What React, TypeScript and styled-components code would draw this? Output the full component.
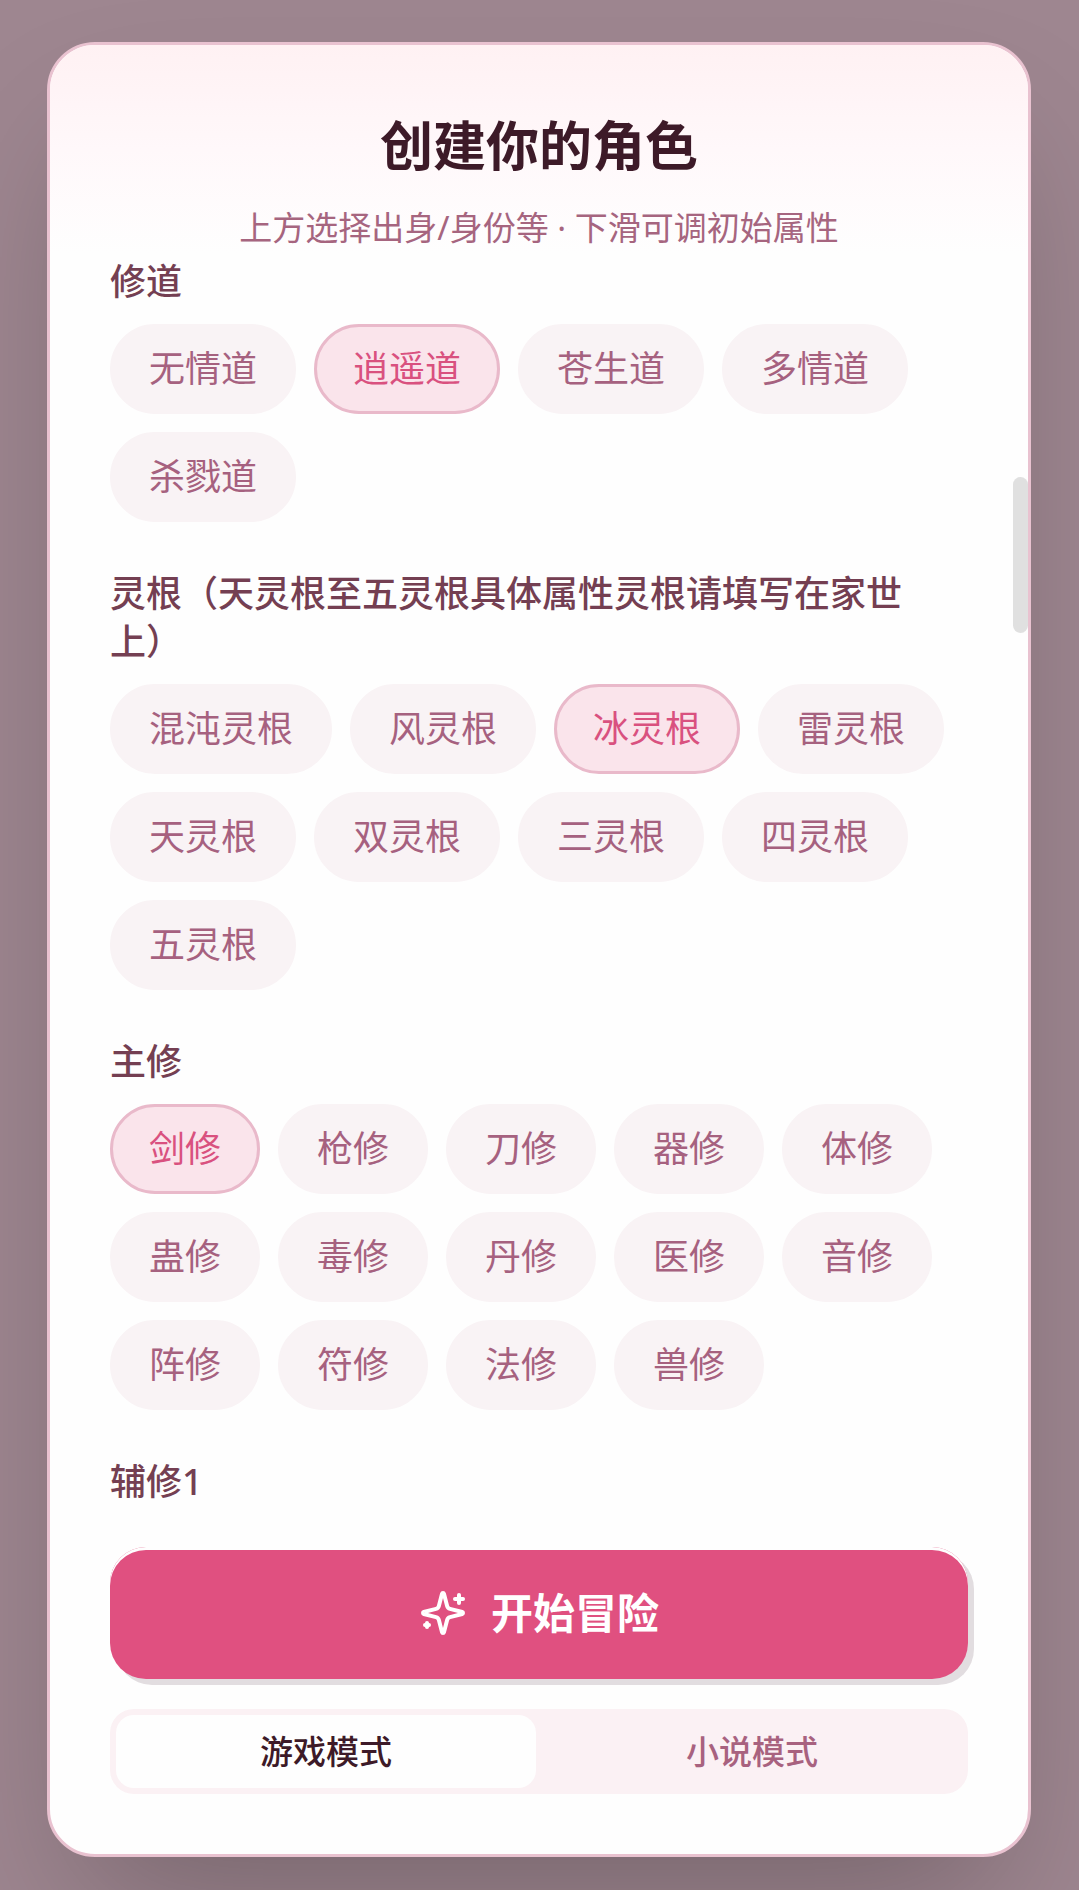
import React, { useState } from "react";
import styled, { createGlobalStyle } from "styled-components";

const GlobalStyle = createGlobalStyle`
  *, *::before, *::after { box-sizing: border-box; }
  body {
    margin: 0;
    background: #9e8690;
    font-family: "Noto Sans", "Noto Sans CJK SC", sans-serif;
    text-spacing-trim: space-all;
  }
  button { font: inherit; margin: 0; cursor: pointer; }
`;

const Backdrop = styled.div`
  display: flex;
  height: 100vh;
  padding: 42px 48px 33px 47px;
  overflow: hidden;
`;

const Dialog = styled.main`
  display: flex;
  flex: 1;
  flex-direction: column;
  min-width: 0;
  overflow: hidden;
  background: #fefefe;
  border: 3px solid #e9c2d0;
  border-radius: 48px;
  box-shadow: 0 75px 150px -36px rgba(0, 0, 0, 0.25);
`;

const Header = styled.header`
  display: flex;
  flex-direction: column;
  gap: 16px;
  padding: 60px 60px 0;
  text-align: center;
  background: linear-gradient(to bottom, #fff1f3, #fff8fa 50%, #fefefe);
`;

const Title = styled.h1`
  margin: 0;
  color: #3d1a28;
  font-size: 53px;
  font-weight: 700;
  line-height: 82px;
`;

const Subtitle = styled.p`
  margin: 0;
  color: #a6657f;
  font-size: 33px;
  line-height: 50px;
`;

const ScrollFrame = styled.div`
  position: relative;
  flex: 1;
  min-height: 0;
`;

const ScrollArea = styled.div`
  display: flex;
  flex-direction: column;
  gap: 48px;
  height: 100%;
  padding: 5px 60px;
  overflow-y: auto;
  scrollbar-width: none;
`;

const ScrollThumb = styled.div`
  position: absolute;
  top: 224px;
  right: 0;
  width: 15px;
  height: 156px;
  background: #e0e0e0;
  border-radius: 8px;
`;

const Section = styled.section`
  display: flex;
  flex-direction: column;
  gap: 18px;
`;

const SectionTitle = styled.h2`
  margin: 0;
  color: #743f52;
  font-size: 36px;
  font-weight: 500;
  line-height: 48px;
`;

const ChipList = styled.div`
  display: flex;
  flex-wrap: wrap;
  gap: 18px;
`;

const Chip = styled.button<{ $active: boolean }>`
  height: 90px;
  padding: 0 36px;
  color: ${(p) => (p.$active ? "#d9517f" : "#a6617f")};
  background: ${(p) => (p.$active ? "#fae4eb" : "#f9f3f5")};
  border: 3px solid ${(p) => (p.$active ? "#e9b9ca" : "#f9f3f5")};
  border-radius: 45px;
  && {
    font-size: 36px;
    line-height: 48px;
  }
`;

const Footer = styled.footer`
  display: flex;
  flex-direction: column;
  gap: 30px;
  padding: 18px 60px 60px;
`;

const StartButton = styled.button`
  display: flex;
  align-items: center;
  justify-content: center;
  gap: 24px;
  height: 132px;
  color: #fff;
  background: #e05080;
  border: 0;
  border-radius: 36px;
  box-shadow: 6px 6px 0 #e2dde0, inset 0 3px 0 #fefefe;
  && {
    font-size: 42px;
    font-weight: 700;
    line-height: 48px;
  }
`;

const ModeSwitch = styled.div`
  display: flex;
  gap: 6px;
  height: 85px;
  padding: 6px;
  background: #fbf1f4;
  border-radius: 24px;
`;

const ModeButton = styled.button<{ $active: boolean }>`
  flex: 1;
  padding: 0;
  color: ${(p) => (p.$active ? "#3d1a28" : "#a8627f")};
  background: ${(p) => (p.$active ? "#fefefe" : "transparent")};
  border: 0;
  border-radius: 18px;
  && {
    font-size: 33px;
    font-weight: 500;
    line-height: 48px;
  }
`;

function SparklesIcon() {
  return (
    <svg
      width="48"
      height="48"
      viewBox="0 0 24 24"
      fill="none"
      stroke="currentColor"
      strokeWidth="2"
      strokeLinecap="round"
      strokeLinejoin="round"
      aria-hidden="true"
    >
      <path d="M9.937 15.5A2 2 0 0 0 8.5 14.063l-6.135-1.582a.5.5 0 0 1 0-.962L8.5 9.936A2 2 0 0 0 9.937 8.5l1.582-6.135a.5.5 0 0 1 .963 0L14.063 8.5A2 2 0 0 0 15.5 9.937l6.135 1.581a.5.5 0 0 1 0 .964L15.5 14.063a2 2 0 0 0-1.437 1.437l-1.582 6.135a.5.5 0 0 1-.963 0z" />
      <path d="M20 3v4" />
      <path d="M22 5h-4" />
      <path d="M4 17v2" />
      <path d="M5 18H3" />
    </svg>
  );
}

interface Group {
  title: string;
  options: string[];
  initial?: string;
}

const groups: Group[] = [
  {
    title: "修道",
    options: ["无情道", "逍遥道", "苍生道", "多情道", "杀戮道"],
    initial: "逍遥道",
  },
  {
    title: "灵根（天灵根至五灵根具体属性灵根请填写在家世上）",
    options: [
      "混沌灵根", "风灵根", "冰灵根", "雷灵根", "天灵根",
      "双灵根", "三灵根", "四灵根", "五灵根",
    ],
    initial: "冰灵根",
  },
  {
    title: "主修",
    options: [
      "剑修", "枪修", "刀修", "器修", "体修", "蛊修", "毒修",
      "丹修", "医修", "音修", "阵修", "符修", "法修", "兽修",
    ],
    initial: "剑修",
  },
  { title: "辅修1", options: [] },
];

function OptionGroup({ title, options, initial }: Group) {
  const [selected, setSelected] = useState(initial);
  return (
    <Section aria-label={title}>
      <SectionTitle>{title}</SectionTitle>
      {options.length > 0 && (
        <ChipList>
          {options.map((option) => (
            <Chip
              key={option}
              type="button"
              $active={option === selected}
              aria-pressed={option === selected}
              onClick={() => setSelected(option)}
            >
              {option}
            </Chip>
          ))}
        </ChipList>
      )}
    </Section>
  );
}

const modes = ["游戏模式", "小说模式"];

export default function App() {
  const [mode, setMode] = useState(modes[0]);
  return (
    <>
      <GlobalStyle />
      <Backdrop>
        <Dialog>
          <Header>
            <Title>创建你的角色</Title>
            <Subtitle>上方选择出身/身份等 · 下滑可调初始属性</Subtitle>
          </Header>
          <ScrollFrame>
            <ScrollArea>
              {groups.map((group) => (
                <OptionGroup key={group.title} {...group} />
              ))}
            </ScrollArea>
            <ScrollThumb aria-hidden="true" />
          </ScrollFrame>
          <Footer>
            <StartButton type="button">
              <SparklesIcon />
              开始冒险
            </StartButton>
            <ModeSwitch>
              {modes.map((name) => (
                <ModeButton
                  key={name}
                  type="button"
                  $active={name === mode}
                  aria-pressed={name === mode}
                  onClick={() => setMode(name)}
                >
                  {name}
                </ModeButton>
              ))}
            </ModeSwitch>
          </Footer>
        </Dialog>
      </Backdrop>
    </>
  );
}
